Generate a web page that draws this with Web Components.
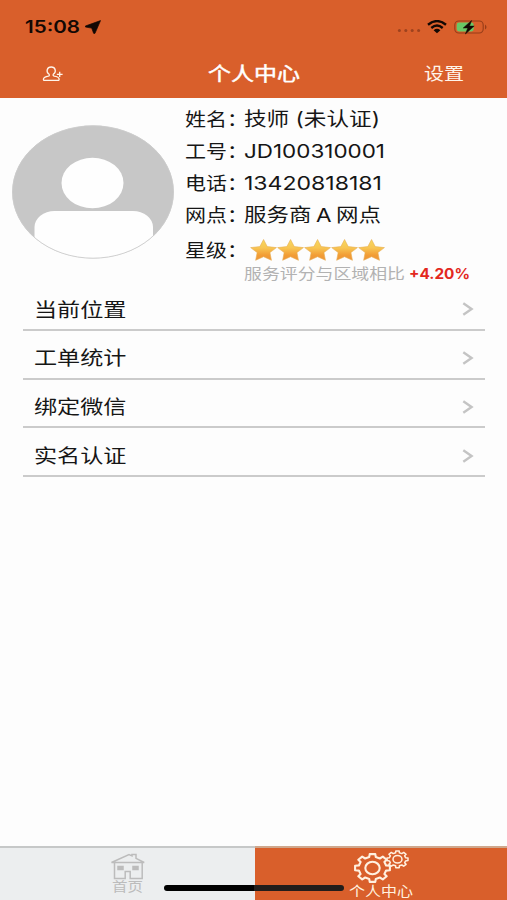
<!DOCTYPE html>
<html lang="zh-CN">
<head>
<meta charset="utf-8">
<title>个人中心</title>
<style>
html,body{margin:0;height:100%}
body{font-family:Inter,"Noto Sans CJK SC",sans-serif;background:#fdfdfd;color:#161616;overflow:hidden}
</style>
</head>
<body>
<profile-app></profile-app>
<script>
const define = (name, html, setup) => customElements.define(name, class extends HTMLElement {
  constructor() { super(); this.attachShadow({mode: 'open'}).innerHTML = html; }
  connectedCallback() { if (setup) setup(this, this.shadowRoot); }
});

/* Text widened horizontally to fill the width given in w */
define('wide-text', `<style>
:host{display:block;flex:none;white-space:nowrap;overflow:visible;height:1.5em;line-height:1.5em}
span{display:inline-block;transform-origin:0 50%;white-space:pre}
</style><span></span>`, (el, root) => {
  const s = root.querySelector('span');
  s.textContent = el.getAttribute('text');
  const w = +el.getAttribute('w');
  el.style.width = w + 'px';
  el.style.fontSize = el.getAttribute('size') + 'px';
  s.style.transform = `scaleX(${w / s.getBoundingClientRect().width})`;
});

define('status-bar', `<style>
:host{display:flex;height:52px;align-items:center;color:#120804;box-sizing:border-box;padding:2px 19px 0 25px}
wide-text{font-weight:600;padding-top:2px}
.loc{margin-left:5px}
.right{margin-left:auto;display:flex;align-items:center}
svg{display:block;flex:none}
</style>
<wide-text text="15:08" w="55" size="17"></wide-text>
<svg class="loc" width="16" height="14" viewBox="0 0 16 14"><path d="M15.5.6.4 6q-.6.7.4 1.1l5.9 1 1.9 5.2q.8.8 1.4 0z" fill="currentColor" stroke="currentColor" stroke-width=".7" stroke-linejoin="round"/></svg>
<div class="right">
<svg width="24" height="14" viewBox="0 0 24 14" fill="#9d421e"><circle cx="2.4" cy="10.5" r="1.5"/><circle cx="8.8" cy="10.5" r="1.5"/><circle cx="15.2" cy="10.5" r="1.5"/><circle cx="21.6" cy="10.5" r="1.5"/></svg>
<svg style="margin:0 7px 0 6px" width="20" height="14" viewBox="0 0 20 14" fill="none" stroke="currentColor" stroke-width="2.4"><path d="M1 4.8Q10-2.6 19 4.8M4.3 8Q10 3.2 15.7 8"/><path d="M6.6 10.2Q10 7.5 13.4 10.2L10 13.2z" fill="currentColor" stroke="none"/></svg>
<svg width="34" height="16" viewBox="0 0 34 16"><rect x=".8" y="2" width="28.4" height="12" rx="4" fill="none" stroke="#963d19" stroke-width="1.1"/><rect x="2.7" y="3.6" width="17" height="8.8" rx="2.3" fill="#68c766"/><path d="M31 5.4q3 2.6 0 5.2z" fill="#963d19"/><path d="M17.6 1.5 9.2 9h4.6l-2.4 6L20.2 7.1h-4.7z" fill="#120804" stroke="#120804" stroke-width=".5"/></svg>
</div>`);

define('nav-bar', `<style>
:host{display:grid;grid-template-columns:208px 1fr 83px;height:46px;align-items:center;color:#fff5ea;box-sizing:border-box}
svg{display:block;margin:-2px 0 0 42px}
.t{-webkit-text-stroke:.45px #fff;color:#fff}
</style>
<svg width="22" height="16" viewBox="0 0 22 16" fill="none" stroke="currentColor" stroke-width="1.3" stroke-linejoin="round"><path d="M7.1 8.3C3.6 5.8 4.9 1 9.2 1S14.8 5.8 11.3 8.3q-.7 1.3.9 1.8 4.6.7 4.9 2.8.2 1.5-1 1.5H2.5q-1.3 0-1-1.5.4-2.1 4.8-2.8 1.6-.4.8-1.8zM17.7 5.8v5.2M14.8 8.4h5.8"/></svg>
<wide-text class="t" text="个人中心" w="92" size="19"></wide-text>
<wide-text text="设置" w="40" size="17"></wide-text>`);

define('user-avatar', `<style>
:host{display:block;width:162px;height:134px}
svg{display:block;width:100%;height:100%}
</style>
<svg viewBox="0 0 162 134"><defs><clipPath id="c"><ellipse cx="81" cy="67" rx="80.7" ry="66.4"/></clipPath></defs>
<g clip-path="url(#c)"><rect width="162" height="134" fill="#c7c7c7"/><ellipse cx="80.5" cy="58" rx="31" ry="25.3" fill="#fefefe"/><rect x="22.5" y="86" width="118.5" height="70" rx="20" ry="16" fill="#fefefe"/></g>
<ellipse cx="81" cy="67" rx="80.5" ry="66.2" fill="none" stroke="#ccc" stroke-width=".9"/></svg>`);

customElements.define('labelled-row', class extends HTMLElement {
  constructor() {
    super();
    this.attachShadow({mode: 'open'}).innerHTML = `<style>
:host{display:flex;height:32px;align-items:center}
.l{margin-right:-4px}
</style><wide-text class="l" text="${this.getAttribute('label')}：" w="63" size="18.5"></wide-text><slot></slot>`;
  }
});

define('star-rating', `<style>
:host{display:flex;margin-left:6px;margin-top:-1px}
svg{display:block;width:27.1px;height:24px}
</style>` + Array.from({length: 5}, () => `<svg viewBox="0 0 27 24"><defs><linearGradient id="g" x1="0" y1="0" x2="0" y2="1"><stop offset="0" stop-color="#f6d85f"/><stop offset=".4" stop-color="#f8c653"/><stop offset=".75" stop-color="#f29d35"/><stop offset="1" stop-color="#ed943a"/></linearGradient></defs><path d="M13.5 1.5 17.2 8.6 26.4 9.6 19.9 14.6 21.4 22.3 13.5 18.7 5.6 22.3 7.1 14.6.6 9.6 9.8 8.6z" fill="url(#g)" stroke="#e7ae54" stroke-width=".6" stroke-linejoin="round"/></svg>`).join(''));

define('profile-card', `<style>
:host{display:flex;height:184px;box-sizing:border-box;padding:6px 0 0 12px}
user-avatar{margin-top:20.5px}
.info{margin-left:11px}
.star{height:37px}
.site{word-spacing:-1.5px}
.cmp{display:flex;align-items:center;height:12px;margin:-1px 0 0 59px;color:#b2b2b2}
.cmp wide-text{height:20px;line-height:20px}
.d{color:#e3281e;font-weight:700;margin-left:4px}
</style>
<user-avatar></user-avatar>
<div class="info">
<labelled-row label="姓名"><wide-text text="技师 (未认证)" w="136" size="19"></wide-text></labelled-row>
<labelled-row label="工号"><wide-text text="JD100310001" w="141" size="19"></wide-text></labelled-row>
<labelled-row label="电话"><wide-text text="13420818181" w="138" size="19"></wide-text></labelled-row>
<labelled-row label="网点"><wide-text class="site" text="服务商 A 网点" w="137" size="19"></wide-text></labelled-row>
<labelled-row class="star" label="星级"><star-rating></star-rating></labelled-row>
<div class="cmp"><wide-text text="服务评分与区域相比" w="161" size="15"></wide-text><wide-text class="d" text="+4.20%" w="61" size="14"></wide-text></div>
</div>`);

customElements.define('menu-row', class extends HTMLElement {
  constructor() {
    super();
    this.attachShadow({mode: 'open'}).innerHTML = `<style>
:host{display:flex;height:48.75px;box-sizing:border-box;align-items:center;justify-content:space-between;border-bottom:2px solid #cbcbcb;padding:8px 11px 0 11px}
svg{display:block}
wide-text{padding-top:3px}
</style><wide-text text="${this.getAttribute('label')}" w="92.5" size="19"></wide-text>
<svg width="12" height="14" viewBox="0 0 12 14"><path d="M1.3 1.2 9.6 7l-8.3 5.8" fill="none" stroke="#c4c4c4" stroke-width="2.4"/></svg>`;
  }
});

define('menu-list', `<style>
:host{display:block;margin:0 22px 0 23px}
</style><menu-row label="当前位置"></menu-row><menu-row label="工单统计"></menu-row><menu-row label="绑定微信"></menu-row><menu-row label="实名认证"></menu-row>`);

/* Outline of a toothed wheel with n teeth, squeezed vertically by k */
const gear = (cx, cy, r, ri, n, k) => {
  const pts = [];
  for (let i = 0; i < n; i++) {
    [[-.30, ri], [-.20, r], [.20, r], [.30, ri]].forEach(([o, q]) => {
      const a = (i + o) / n * 2 * Math.PI - Math.PI / 2;
      pts.push((cx + q * Math.cos(a)).toFixed(1) + ',' + (cy + k * q * Math.sin(a)).toFixed(1));
    });
  }
  return `<polygon points="${pts.join(' ')}"/>`;
};

define('tab-bar', `<style>
:host{display:grid;grid-template-columns:254.5px 1fr;height:54px;position:relative}
.tab{display:flex;flex-direction:column;align-items:center;border-top:2px solid #c6c8c8;box-sizing:border-box}
.home{background:#eceeef;color:#bcbcbc}
.me{background:#d95f2b;color:#fff0df;border-top-color:#cfa78c}
svg{display:block}
.home svg{margin:4px 0 0 2px}
.me svg{margin-top:1px}
.home wide-text{margin-top:-4px}
.me wide-text{margin-top:-3px}
.bar{position:absolute;left:164px;top:39px;width:180px;height:6px;border-radius:3px;background:linear-gradient(90deg,#000 50%,#221d1b 50%)}
</style>
<div class="tab home"><svg width="36" height="29" viewBox="0 0 36 29" fill="none" stroke="currentColor" stroke-width="1.5"><path d="M1.5 10.5 19 2.5l3 1.4V2.5h4v3.8l8.2 4.2zM4.5 10.5v16h10.7v-7h5v7h12v-16"/><path d="M8 14.5h5v3H8zM23 14.5h5v3h-5z" fill="currentColor"/></svg>
<wide-text text="首页" w="31" size="13"></wide-text></div>
<div class="tab me"><svg width="56" height="35" viewBox="0 0 56 35" fill="none" stroke="currentColor" stroke-linejoin="round"><g stroke-width="2.1">${gear(19.5, 19, 17.6, 14, 8, .8)}<ellipse cx="19.5" cy="19" rx="7.2" ry="6.2"/></g><g stroke-width="1.5">${gear(44.5, 10.3, 10.6, 8.3, 8, .8)}<ellipse cx="44.5" cy="10.3" rx="4.5" ry="3.7"/></g></svg>
<wide-text text="个人中心" w="64" size="13.5"></wide-text></div>
<div class="bar"></div>`);

define('profile-app', `<style>
:host{display:flex;flex-direction:column;height:900px;background:#fdfdfd}
header{background:#d95f2b;height:98px}
tab-bar{margin-top:auto}
</style>
<header><status-bar></status-bar><nav-bar></nav-bar></header>
<profile-card></profile-card>
<menu-list></menu-list>
<tab-bar></tab-bar>`);
</script>
</body>
</html>
